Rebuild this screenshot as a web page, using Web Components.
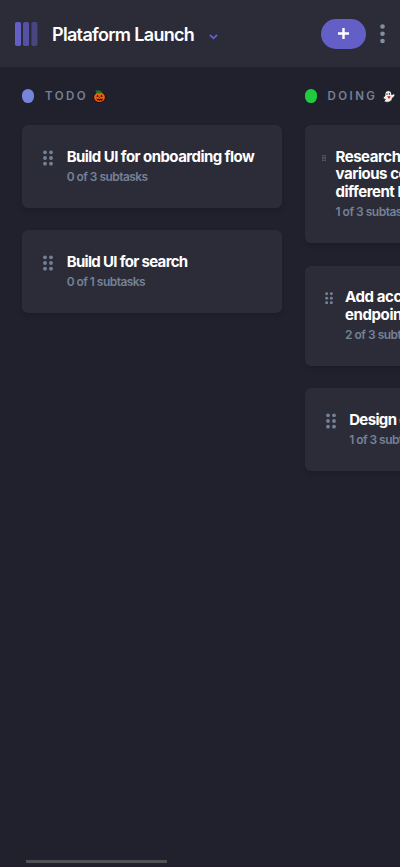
<!DOCTYPE html>
<html lang="en">
<head>
<meta charset="utf-8">
<title>Kanban</title>
<style>
html,body{margin:0;height:100%;overflow:hidden;background:#21212d}
body{font-family:Inter,"Noto Sans",sans-serif;color:#fff}
</style>
</head>
<body>
<kanban-app>
  <app-header slot="header">Plataform Launch</app-header>
  <board-column name="TODO" color="#7684dc">
    <pumpkin-icon slot="emoji"></pumpkin-icon>
    <task-card style="--h:82.75px;--ls:-.56px;--ss:-.55px"><span>Build UI for onboarding flow</span><span slot="sub">0 of 3 subtasks</span></task-card>
    <task-card style="--h:82.5px;--pt:22.5px;--ls:-.68px;--ss:-.55px"><span>Build UI for search</span><span slot="sub">0 of 1 subtasks</span></task-card>
  </board-column>
  <board-column name="DOING" color="#20cb40">
    <ghost-icon slot="emoji"></ghost-icon>
    <task-card style="--h:118px;--pt:22.8px;--lh:17.4px;--gx:17px;--gw:4px;--gh:6px;--gap:10px;--ls:-.46px;--ss:-.5px"><span>Research pricing points of<br>various competitors and trial<br>different business models</span><span slot="sub">1 of 3 subtasks</span></task-card>
    <task-card style="--h:100px;--pt:22.4px;--lh:18px;--gx:20px;--gw:8px;--gh:12.5px;--gap:12.5px;--ls:-.4px;--ss:-.5px"><span>Add account management<br>endpoints</span><span slot="sub">2 of 3 subtasks</span></task-card>
    <task-card style="--h:82.5px;--ls:-.65px;--ss:-.55px"><span>Design onboarding flow</span><span slot="sub">1 of 3 subtasks</span></task-card>
  </board-column>
</kanban-app>
<script>
function define(name, html, setup) {
  customElements.define(name, class extends HTMLElement {
    constructor() {
      super();
      this.attachShadow({ mode: "open" }).innerHTML = html;
    }
    connectedCallback() { if (setup) setup(this, this.shadowRoot); }
  });
}

define("pumpkin-icon", `<style>:host{display:block;width:13px;height:13px}svg{display:block}</style>
<svg width="13" height="13" viewBox="0 0 13 13"><ellipse cx="6.5" cy="7.2" rx="6.1" ry="5.6" fill="#190b08"/><ellipse cx="6.5" cy="7.2" rx="5.4" ry="4.9" fill="#f45b0a"/><path d="M2.2 .8 5.2.3 8.3 1.3 9 3 6.5 3.6 3.5 2.8Z" fill="#168020"/><path d="m3.4 6.8 1.3-2 1 2zm4 0 1-2 1.4 2zM6 7.8l.6-1 .6 1zM3 8.5l1.6.6.7-.7 1.2.8 1.2-.8.8.7 1.6-.6-1 2-1.2.3-.7-.8-1 1-.8-1-.8.5Z" fill="#230d06"/></svg>`);

define("ghost-icon", `<style>:host{display:block;width:13px;height:13px;margin-left:.5px}svg{display:block}</style>
<svg width="13" height="13" viewBox="0 0 13 13"><path d="M2 4.4C2 .6 6.3-.4 8 2.3L8.8 5l1.8-1.3 1.3 1.5-1.5 2.2-1.2.6c0 2.5-2.3 4.4-5.6 4.2L.8 11.4l1.8-2-2-.7-.2-1.6L2 6Z" fill="#f2f2f2" stroke="#111118" stroke-width=".6"/><ellipse cx="4" cy="4.1" rx=".6" ry=".9" fill="#151515"/><ellipse cx="6.4" cy="3.9" rx=".6" ry=".9" fill="#151515"/><path d="M4.2 6.3 7.5 5.9 7.1 7.8 6 8.9 4.9 7.8Z" fill="#df2e27"/></svg>`);

define("app-header", `<style>
:host{display:flex;align-items:center;box-sizing:border-box;height:67px;padding:0 15px 0 15px;background:#2c2c38}
svg{display:block;flex:none}
h1{margin:2px 0 0 14px;width:142.5px;font:600 18px/24px Inter,sans-serif;letter-spacing:-.68px;white-space:nowrap}
.chev{margin:7px 0 0 14.5px}
button{margin:0 14px 0 auto;width:45px;height:30px;padding:0;border:0;border-radius:15px;background:#635fc7;display:grid;place-items:center}
</style>
<svg width="23" height="24" viewBox="0 0 23 24" fill="#635fc7"><rect width="6" height="24" rx="1.7"/><rect x="8" width="6" height="24" rx="1.7" opacity=".75"/><rect x="16.4" width="6" height="24" rx="1.7" opacity=".5"/></svg>
<h1><slot></slot></h1>
<svg class="chev" width="9" height="6" viewBox="0 0 9 6"><path d="m1 1 3.5 3.3L8 1" fill="none" stroke="#635fc7" stroke-width="1.8"/></svg>
<button aria-label="Add"><svg width="11" height="11" viewBox="0 0 11 11"><path d="M5.5 0v11M0 5.5h11" stroke="#fff" stroke-width="2.4"/></svg></button>
<svg width="5" height="20" viewBox="0 0 5 20" fill="#828fa3"><circle cx="2.5" cy="2.5" r="2.3"/><circle cx="2.5" cy="9.8" r="2.3"/><circle cx="2.5" cy="17" r="2.3"/></svg>`);

define("board-column", `<style>
:host{display:flex;flex-direction:column;gap:22.5px;flex:none;width:260px}
header{display:flex;align-items:center;height:14px;margin:0 0 -.5px}
i{width:12.3px;height:14px;border-radius:6.15px/6.5px;flex:none}
b{margin-left:10.7px;font:600 11.5px/14px Inter,sans-serif;letter-spacing:2.45px;color:#748196}
slot[name=emoji]{display:block;margin-left:4.7px}
</style><header><i></i><b></b><slot name="emoji"></slot></header><slot></slot>`, (el, root) => {
  root.querySelector("i").style.background = el.getAttribute("color");
  root.querySelector("b").textContent = el.getAttribute("name");
});

define("task-card", `<style>
:host{display:flex;align-items:flex-start;box-sizing:border-box;flex:none;height:var(--h);padding:var(--pt,23px) 0 0 var(--gx,21px);border-radius:6px;background:#2c2c38;box-shadow:0 3px 5px #0002}
.grip{display:flex;align-items:center;height:20px;flex:none}
svg{display:block;width:var(--gw,10px);height:var(--gh,16px)}
.text{margin-left:var(--gap,13.7px)}
h2{margin:0;font:700 15px/var(--lh,17.5px) Inter,sans-serif;letter-spacing:var(--ls);white-space:nowrap}
p{margin:3.5px 0 0;font:600 12px/15px Inter,sans-serif;letter-spacing:var(--ss);color:#748196;white-space:nowrap}
</style>
<div class="grip"><svg viewBox="0 0 10 16" fill="#748196"><circle cx="2" cy="2.3" r="1.9"/><circle cx="8" cy="2.3" r="1.9"/><circle cx="2" cy="8" r="1.9"/><circle cx="8" cy="8" r="1.9"/><circle cx="2" cy="13.7" r="1.9"/><circle cx="8" cy="13.7" r="1.9"/></svg></div>
<div class="text"><h2><slot></slot></h2><p><slot name="sub"></slot></p></div>`);

define("kanban-app", `<style>
:host{display:flex;flex-direction:column;width:400px;height:867px;overflow:hidden;background:#21212d}
main{display:flex;gap:22.5px;padding:22px 0 0 22px;flex:1;min-height:0;overflow:hidden}
.bar{flex:none;width:141px;height:3px;margin:0 0 4px 26px;background:#505055}
</style><slot name="header"></slot><main><slot></slot></main><div class="bar"></div>`);
</script>
</body>
</html>
